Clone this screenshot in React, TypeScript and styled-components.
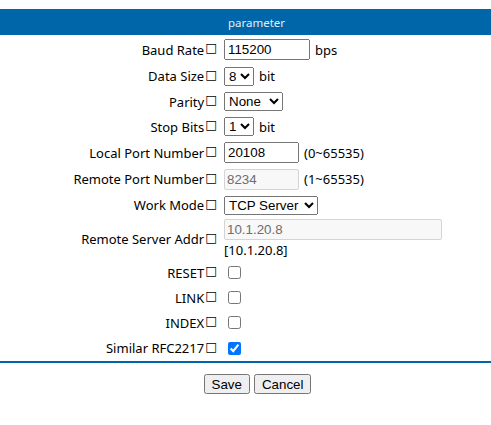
import React from "react";
import styled, { createGlobalStyle } from "styled-components";

const Global = createGlobalStyle`
  html, body { margin: 0; padding: 0; background: #fff; }
  body { padding-top: 9px; font-family: "Noto Sans", "DejaVu Sans", sans-serif; font-size: 13px; color: #000; }
`;

const Header = styled.div`
  height: 26px;
  background: #0066aa;
  color: #e4edf5;
  font-family: "Noto Sans", sans-serif;
  font-size: 11.5px;
  display: flex;
  align-items: center;
  justify-content: center;
  padding-left: 22px;
`;

const Form = styled.div`
  display: grid;
  grid-template-columns: 217px 1fr;
  column-gap: 7px;
  padding-top: 1px;
`;

const Label = styled.div<{ $h: number }>`
  height: ${(p) => p.$h}px;
  display: flex;
  align-items: center;
  justify-content: flex-end;
  white-space: nowrap;
  font-size: 13px;
`;

const Tofu = styled.span`
  font-family: "DejaVu Sans", sans-serif;
  font-size: 12.5px;
  margin-left: 1px;
  position: relative;
  top: -2px;
`;

const Value = styled.div<{ $h: number; $stack?: boolean }>`
  height: ${(p) => p.$h}px;
  display: flex;
  flex-direction: ${(p) => (p.$stack ? "column" : "row")};
  align-items: ${(p) => (p.$stack ? "flex-start" : "center")};
  justify-content: ${(p) => (p.$stack ? "center" : "flex-start")};
  gap: ${(p) => (p.$stack ? "1px" : "5px")};
  white-space: nowrap;
`;

const TextInput = styled.input<{ $w: number }>`
  box-sizing: border-box;
  width: ${(p) => p.$w}px;
  height: 21px;
  font-family: "Liberation Sans", Arial, sans-serif;
  font-size: 13.33px;
  padding: 1px 2px;
  margin: 0;
  &:disabled {
    background: #f8f8f8;
    color: #6d6d6d;
    border: 1px solid #d4d4d4;
    border-radius: 2px;
  }
`;

const Select = styled.select<{ $w?: number }>`
  font-family: "Liberation Sans", Arial, sans-serif;
  font-size: 13.33px;
  margin: 0;
  ${(p) => (p.$w ? `width: ${p.$w}px;` : "")}
`;

const Check = styled.input`
  margin: 0 0 0 4px;
  width: 13px;
  height: 13px;
`;

const Unit = styled.span`
  font-size: 13px;
`;

const Rule = styled.div`
  height: 2px;
  background: #0066aa;
`;

const Buttons = styled.div`
  display: flex;
  justify-content: center;
  gap: 4px;
  padding-left: 24px;
  margin-top: 11px;
`;

const Button = styled.button`
  font-family: "Liberation Sans", Arial, sans-serif;
  font-size: 13.33px;
  padding: 1px 6px;
  height: 20px;
`;

const Name = ({ children }: { children: React.ReactNode }) => (
  <>
    {children}
    <Tofu>{"\u25A1"}</Tofu>
  </>
);

export default function App() {
  return (
    <>
      <Global />
      <Header>parameter</Header>
      <Form>
        <Label $h={27}><Name>Baud Rate</Name></Label>
        <Value $h={27}>
          <TextInput $w={86} defaultValue="115200" />
          <Unit>bps</Unit>
        </Value>

        <Label $h={26}><Name>Data Size</Name></Label>
        <Value $h={26}>
          <Select defaultValue="8" $w={30}>
            <option>5</option>
            <option>6</option>
            <option>7</option>
            <option>8</option>
          </Select>
          <Unit>bit</Unit>
        </Value>

        <Label $h={25}><Name>Parity</Name></Label>
        <Value $h={25}>
          <Select defaultValue="None" $w={59}>
            <option>None</option>
            <option>Odd</option>
            <option>Even</option>
          </Select>
        </Value>

        <Label $h={25}><Name>Stop Bits</Name></Label>
        <Value $h={25}>
          <Select defaultValue="1" $w={30}>
            <option>1</option>
            <option>2</option>
          </Select>
          <Unit>bit</Unit>
        </Value>

        <Label $h={27}><Name>Local Port Number</Name></Label>
        <Value $h={27}>
          <TextInput $w={75} defaultValue="20108" />
          <Unit>(0~65535)</Unit>
        </Value>

        <Label $h={26}><Name>Remote Port Number</Name></Label>
        <Value $h={26}>
          <TextInput $w={75} defaultValue="8234" disabled />
          <Unit>(1~65535)</Unit>
        </Value>

        <Label $h={26}><Name>Work Mode</Name></Label>
        <Value $h={26}>
          <Select defaultValue="TCP Server" $w={94}>
            <option>TCP Server</option>
            <option>TCP Client</option>
            <option>UDP</option>
          </Select>
        </Value>

        <Label $h={42}><Name>Remote Server Addr</Name></Label>
        <Value $h={42} $stack>
          <TextInput $w={218} defaultValue="10.1.20.8" disabled />
          <Unit>[10.1.20.8]</Unit>
        </Value>

        <Label $h={25}><Name>RESET</Name></Label>
        <Value $h={25}>
          <Check type="checkbox" />
        </Value>

        <Label $h={25}><Name>LINK</Name></Label>
        <Value $h={25}>
          <Check type="checkbox" />
        </Value>

        <Label $h={25}><Name>INDEX</Name></Label>
        <Value $h={25}>
          <Check type="checkbox" />
        </Value>

        <Label $h={26}><Name>Similar RFC2217</Name></Label>
        <Value $h={26}>
          <Check type="checkbox" defaultChecked />
        </Value>
      </Form>
      <Rule />
      <Buttons>
        <Button>Save</Button>
        <Button>Cancel</Button>
      </Buttons>
    </>
  );
}
